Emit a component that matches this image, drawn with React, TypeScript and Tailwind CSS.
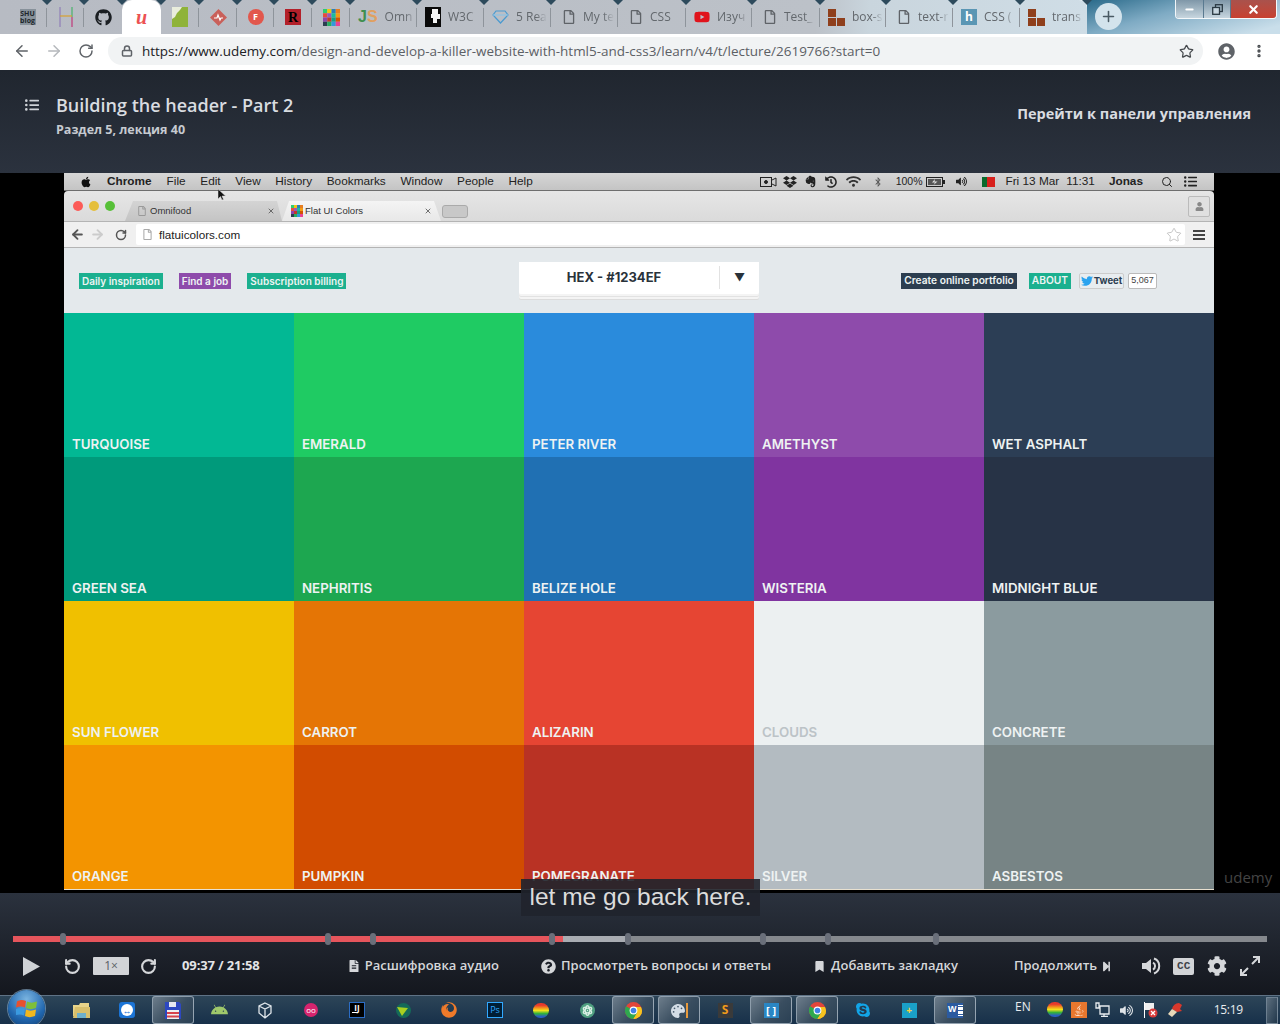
import { ArrowLeft, ArrowRight, Lock, MoreVertical, Plus, RotateCcw, RotateCw, Search, Star, Minus, X } from "lucide-react";
import {
  FaAndroid,
  FaApple,
  FaAtom,
  FaBluetoothB,
  FaBookmark,
  FaCog,
  FaDropbox,
  FaEvernote,
  FaFileAlt,
  FaFirefox,
  FaGithub,
  FaHistory,
  FaJava,
  FaListUl,
  FaPalette,
  FaQuestionCircle,
  FaRegFile,
  FaSkype,
  FaStepForward,
  FaTwitter,
  FaUser,
  FaUserCircle,
  FaVolumeUp,
  FaWifi,
  FaYoutube,
} from "react-icons/fa";
import type { ReactNode } from "react";

const BrickIcon = () => (
  <svg width="17" height="17" viewBox="0 0 17 17">
    <rect x="0" y="0" width="8" height="8" fill="#8f3f1c" />
    <rect x="0" y="9" width="8" height="8" fill="#8f3f1c" />
    <rect x="9" y="9" width="8" height="8" fill="#8f3f1c" />
  </svg>
);

const DocIcon = () => <FaRegFile className="ml-[3px] text-[#5f6368]" size={14} />;

const MosaicIcon = ({ size }: { size: number }) => (
  <svg width={size} height={size} viewBox="0 0 4 4">
    {["#2ecc71", "#f1c40f", "#2980b9", "#e67e22", "#e74c3c", "#9b59b6", "#1abc9c", "#f39c12", "#8e44ad", "#c0392b", "#16a085", "#d35400", "#2c3e50", "#27ae60", "#3498db", "#e84393"].map((c, i) => (
      <rect key={i} x={i % 4} y={Math.floor(i / 4)} width="1" height="1" fill={c} />
    ))}
  </svg>
);

const ChromeIcon = () => (
  <svg width="17" height="17" viewBox="0 0 24 24">
    <circle cx="12" cy="12" r="12" fill="#e2453a" />
    <path d="M12 12 1.600 6A12 12 0 0 0 12 24l6-10z" fill="#2fa84f" />
    <path d="M12 12h12a12 12 0 0 1-12 12l6-10z" fill="#f7c41f" />
    <path d="M12 7h10.500A12 12 0 0 1 24 12a12 12 0 0 1-12 12l5.500-9z" fill="#f7c41f" />
    <circle cx="12" cy="12" r="5.500" fill="#fff" />
    <circle cx="12" cy="12" r="4" fill="#3f82e8" />
  </svg>
);

const RainbowBall = () => (
  <span className="h-[15px] w-[16px] rounded-full bg-[linear-gradient(#e8392c_15%,#f59a1c_35%,#f2e21c_50%,#35b23a_70%,#2a5fc0_90%)]" />
);

const tabs: { w: number; icon: ReactNode; label?: string; active?: boolean }[] = [
  {
    w: 39,
    icon: (
      <span className="flex h-[16px] w-[16px] items-center justify-center bg-[#87919a] text-center text-[7px] font-bold leading-[7px] text-[#20262c]">
        SHU blog
      </span>
    ),
  },
  {
    w: 37,
    icon: (
      <svg width="14" height="20" viewBox="0 0 14 20" fill="none" strokeWidth="1.200">
        <path d="M1 0v20" stroke="#8f7fb8" />
        <path d="M13 0v10" stroke="#49b36b" />
        <path d="M13 10v10" stroke="#c0397a" />
        <path d="M1 9h12" stroke="#d8a030" />
      </svg>
    ),
  },
  { w: 38, icon: <FaGithub size={17} className="text-[#1b1f23]" /> },
  {
    w: 39,
    active: true,
    icon: (
      <span className="font-['Liberation_Serif',serif] text-[20px] font-bold italic leading-none text-[#ec5252]">u</span>
    ),
  },
  {
    w: 38,
    icon: (
      <svg width="16" height="20" viewBox="0 0 16 20">
        <rect width="16" height="20" fill="#8fb339" />
        <path d="M0 0h10L8 3 5 6 3 10 0 12z" fill="#e9eddc" />
      </svg>
    ),
  },
  {
    w: 38,
    icon: (
      <svg width="17" height="17" viewBox="0 0 17 17">
        <path d="M8.500 0 17 8.500 8.500 17 0 8.500z" fill="#c9605a" />
        <path d="M4 9h3l1-3 2 5 1-2h2" stroke="#fff" strokeWidth="1.200" fill="none" />
      </svg>
    ),
  },
  {
    w: 37,
    icon: (
      <span className="flex h-4 w-4 items-center justify-center rounded-full bg-[#e2574c] text-[9px] font-bold text-white">F</span>
    ),
  },
  {
    w: 38,
    icon: (
      <span className="flex h-4 w-4 items-center justify-center bg-[#b3202a] font-['Liberation_Serif',serif] text-[14px] font-bold text-black">R</span>
    ),
  },
  { w: 38, icon: <MosaicIcon size={17} /> },
  {
    w: 67,
    icon: (
      <span className="font-['Liberation_Sans',sans-serif] text-[16px] font-bold leading-none">
        <span className="text-[#3f8f4f]">J</span>
        <span className="text-[#e0a060]">S</span>
      </span>
    ),
    label: "Omn",
  },
  {
    w: 67,
    icon: (
      <svg width="16" height="20" viewBox="0 0 16 20">
        <rect width="16" height="20" fill="#0a0a0a" />
        <path d="M7 2h6v5h2v5h-3v4H8v-5H6V7h1z" fill="#f4f4f4" />
      </svg>
    ),
    label: "W3C",
  },
  {
    w: 67,
    icon: (
      <svg width="17" height="14" viewBox="0 0 17 14" fill="none" stroke="#4a9ad0" strokeWidth="1.200">
        <path d="M4 1h9l3 4-7.500 8L1 5z" />
        <path d="M1 5h15" stroke="#8ec4e4" />
      </svg>
    ),
    label: "5 Rea",
  },
  { w: 67, icon: <DocIcon />, label: "My te" },
  { w: 68, icon: <DocIcon />, label: "CSS" },
  { w: 66, icon: <FaYoutube size={16} className="text-[#e0141c]" />, label: "Изуч" },
  { w: 68, icon: <DocIcon />, label: "Test_" },
  { w: 66, icon: <BrickIcon />, label: "box-s" },
  { w: 67, icon: <DocIcon />, label: "text-r" },
  {
    w: 67,
    icon: <span className="flex h-4 w-4 items-center justify-center bg-[#5a96b4] text-[12px] font-bold text-white">h</span>,
    label: "CSS (",
  },
  { w: 67, icon: <BrickIcon />, label: "trans" },
];

function TabStrip() {
  return (
    <div className="flex h-[34px] font-['Open_Sans',sans-serif]">
      <div className="flex w-[1087px] shrink-0 rounded-tr-[8px] bg-[linear-gradient(90deg,#b7bbc3_0%,#bcc1c8_75%,#c9d5dd_80%,#cfdde6_100%)] pl-[8px]">
        {tabs.map((t, i) => (
          <div
            key={i}
            style={{ width: t.w }}
            className={`relative flex h-full shrink-0 items-center ${t.label ? "pl-[8px]" : "justify-center"} ${t.active ? "rounded-t-[10px] bg-white" : ""}`}
          >
            {t.icon}
            {t.label && (
              <span className="ml-[7px] w-[31px] overflow-hidden whitespace-nowrap text-[12px] text-[#63686d] [mask-image:linear-gradient(90deg,#000_65%,transparent)]">
                {t.label}
              </span>
            )}
            {i < tabs.length - 1 && !t.active && i !== 2 && (
              <span className="absolute right-0 top-[8px] h-[19px] w-px bg-[#8e949b]" />
            )}
            <span className="absolute right-[-5px] top-0 h-0 w-0 border-x-[5px] border-t-[5px] border-x-transparent border-t-[#2d4a5c]" />
          </div>
        ))}
      </div>
      <div className="flex flex-1 items-start bg-[linear-gradient(165deg,#2a6a8a_0%,#7fabc4_40%,#c9deea_90%)]">
        <div className="ml-[8px] mt-[3px] flex h-[27px] w-[27px] items-center justify-center rounded-full bg-[#d3e3ec]">
          <Plus size={17} className="text-[#4a5a64]" strokeWidth={2.2} />
        </div>
        <div className="ml-auto mr-[3px] flex h-[19px] w-[102px] overflow-hidden rounded-b-[4px] border border-t-0 border-white/90">
          <div className="flex w-[28px] items-center justify-center border-r border-[#5a7a90] bg-gradient-to-b from-[#7f97a8] to-[#c7d6df]">
            <Minus size={11} className="text-white" strokeWidth={4} />
          </div>
          <div className="flex w-[27px] items-center justify-center border-r border-[#5a7a90] bg-gradient-to-b from-[#7f97a8] to-[#c7d6df]">
            <svg width="11" height="11" viewBox="0 0 11 11" fill="none" stroke="#2b3a44" strokeWidth="1.300">
              <rect x="3.500" y="0.700" width="6.800" height="6.800" />
              <rect x="0.700" y="3.500" width="6.800" height="6.800" fill="#c7d6df" />
            </svg>
          </div>
          <div className="flex flex-1 items-center justify-center bg-gradient-to-b from-[#a9524c] to-[#c8402f]">
            <X size={13} className="text-white" strokeWidth={4} />
          </div>
        </div>
      </div>
    </div>
  );
}

function Toolbar() {
  return (
    <div className="flex h-[36px] items-center bg-white pb-[2px] font-['Open_Sans',sans-serif]">
      <ArrowLeft size={18} className="ml-[13px] text-[#5f6368]" strokeWidth={2} />
      <ArrowRight size={18} className="ml-[14px] text-[#b5b8bc]" strokeWidth={2} />
      <RotateCw size={16} className="ml-[15px] text-[#5f6368]" strokeWidth={2.2} />
      <div className="ml-[14px] flex h-[28px] w-[1095px] items-center rounded-full bg-[#f1f3f4] pl-[13px]">
        <Lock size={12} className="text-[#5f6368]" strokeWidth={3} />
        <span className="ml-[9px] mt-[1px] whitespace-nowrap text-[13.470px] text-[#5c6065]">
          <span className="text-[#202124]">https://www.udemy.com</span>/design-and-develop-a-killer-website-with-html5-and-css3/learn/v4/t/lecture/2619766?start=0
        </span>
        <Star size={15} className="ml-auto mr-[9px] text-[#45494d]" strokeWidth={2} />
      </div>
      <FaUserCircle size={17} className="ml-[15px] text-[#5f6368]" />
      <MoreVertical size={16} className="ml-[16px] text-[#45494d]" strokeWidth={3} />
    </div>
  );
}

function LectureHeader() {
  return (
    <div className="flex h-[103px] items-start bg-gradient-to-b from-[#20262f] to-[#2b323e] font-['Open_Sans',sans-serif] text-[#d9dce0]">
      <FaListUl size={14} className="ml-[25px] mt-[28px] shrink-0 text-[#cfd3d8]" />
      <div className="ml-[17px] mt-[23px]">
        <div className="text-[18px] font-semibold leading-[24px]">Building the header - Part 2</div>
        <div className="mt-[4px] text-[12.500px] font-bold leading-[18px] text-[#c6cad0]">Раздел 5, лекция 40</div>
      </div>
      <div className="ml-auto mr-[29px] mt-[33px] text-[14.500px] font-bold leading-[22px]">Перейти к панели управления</div>
    </div>
  );
}

function MacMenuBar() {
  const menus = ["File", "Edit", "View", "History", "Bookmarks", "Window", "People", "Help"];
  return (
    <div className="flex h-[18px] items-center border-b border-[#6e6e6e] bg-gradient-to-b from-[#d6d6d6] to-[#c4c4c4] font-['Liberation_Sans',sans-serif] text-[11.800px] text-[#222]">
      <FaApple size={12} className="ml-[16px] text-[#111]" />
      <span className="ml-[15px] font-bold">Chrome</span>
      <div className="ml-[15px] flex gap-[14.700px]">
        {menus.map((m) => (
          <span key={m}>{m}</span>
        ))}
      </div>
      <div className="ml-auto flex items-center text-[#222]">
        <svg width="17" height="12" viewBox="0 0 17 12" fill="none" stroke="#222">
          <rect x="0.500" y="1.500" width="11" height="9" />
          <circle cx="6" cy="6" r="1.500" fill="#222" />
          <path d="M12 4l4-2v8l-4-2" />
        </svg>
        <FaDropbox size={14} className="ml-[6px]" />
        <FaEvernote size={13} className="ml-[7px]" />
        <FaHistory size={12} className="ml-[8px]" />
        <FaWifi size={15} className="ml-[9px] text-[#333]" />
        <FaBluetoothB size={10} className="ml-[12px] text-[#555]" />
        <span className="ml-[13px] text-[10.500px]">100%</span>
        <svg className="ml-[4px]" width="19" height="10" viewBox="0 0 19 10">
          <rect x="0.500" y="0.500" width="16" height="9" fill="none" stroke="#222" />
          <path d="M2 2h13v6H2z" fill="#555" />
          <path d="M9 2 6 5.500h3L7.500 8l4-3.500h-3z" fill="#ddd" />
          <rect x="17" y="3" width="2" height="4" fill="#222" />
        </svg>
        <FaVolumeUp size={11} className="ml-[11px]" />
        <span className="ml-[15px] flex h-[10px] w-[13px]">
          <span className="w-[5px] bg-[#0a6a2c]" />
          <span className="flex-1 bg-[#d8201c]" />
        </span>
        <span className="ml-[10px]">Fri 13 Mar</span>
        <span className="ml-[7px]">11:31</span>
        <span className="ml-[14px] font-semibold">Jonas</span>
        <Search size={12} className="ml-[18px]" />
        <FaListUl size={13} className="ml-[11px] mr-[17px]" />
      </div>
    </div>
  );
}

function MacChrome() {
  return (
    <div className="rounded-t-[4px] bg-gradient-to-b from-[#e6e6e6] to-[#d0d0d0] font-['Liberation_Sans',sans-serif]">
      {/* Tabs */}
      <div className="flex h-[30px] items-end">
        <div className="mb-[10px] ml-[9px] flex gap-[6px]">
          <span className="h-[10px] w-[10px] rounded-full bg-[#fc5b57]" />
          <span className="h-[10px] w-[10px] rounded-full bg-[#e5bf3c]" />
          <span className="h-[10px] w-[10px] rounded-full bg-[#57c038]" />
        </div>
        <div className="ml-[10px] flex h-[20px] w-[157px] items-center bg-gradient-to-b from-[#d4d4d4] to-[#c4c4c4] pl-[12px] text-[9.500px] text-[#333] [clip-path:polygon(0_100%,8px_0,calc(100%-5px)_0,100%_100%)]">
          <FaRegFile size={10} className="text-[#999]" />
          <span className="ml-[3px]">Omnifood</span>
          <X size={8} className="ml-auto mr-[7px] text-[#555]" strokeWidth={2.5} />
        </div>
        <div className="flex h-[20px] w-[159px] items-center bg-gradient-to-b from-[#f4f4f4] to-[#e8e8e8] pl-[9px] text-[9.500px] text-[#333] [clip-path:polygon(0_100%,7px_0,calc(100%-7px)_0,100%_100%)]">
          <MosaicIcon size={12} />
          <span className="ml-[2px]">Flat UI Colors</span>
          <X size={8} className="ml-auto mr-[9px] text-[#555]" strokeWidth={2.5} />
        </div>
        <div className="mb-[3px] ml-[1px] h-[13px] w-[26px] rounded-[3px] border border-[#aaa] bg-[#c8c8c8]" />
        <div className="mb-[4px] ml-auto mr-[4px] flex h-[21px] w-[22px] items-center justify-center rounded-[2px] border border-[#bbb] bg-[#e0e0e0]">
          <FaUser size={9} className="text-[#888]" />
        </div>
      </div>
      {/* Address */}
      <div className="flex h-[27px] items-center border-y border-[#b4b4b4] bg-[#f0f0f0]">
        <ArrowLeft size={15} className="ml-[6px] text-[#555]" strokeWidth={3} />
        <ArrowRight size={15} className="ml-[5px] text-[#ccc]" strokeWidth={3} />
        <RotateCw size={12} className="ml-[10px] text-[#555]" strokeWidth={3} />
        <div className="ml-[9px] flex h-[21px] w-[1049px] items-center rounded-[2px] bg-white pl-[6px]">
          <FaRegFile size={11} className="text-[#aaa]" />
          <span className="ml-[6px] text-[11.700px] text-[#222]">flatuicolors.com</span>
          <Star size={16} className="ml-auto mr-[3px] text-[#aaa]" strokeWidth={1} />
        </div>
        <div className="ml-[8px] flex w-[12px] flex-col gap-[2px]">
          <span className="h-[2px] bg-[#444]" />
          <span className="h-[2px] bg-[#444]" />
          <span className="h-[2px] bg-[#444]" />
        </div>
      </div>
    </div>
  );
}

const Pill = ({ bg, children }: { bg: string; children: ReactNode }) => (
  <span className={`flex h-[16px] items-center whitespace-nowrap px-[3px] font-semibold text-[#eef4f3] ${bg}`}>{children}</span>
);

function FlatNav() {
  return (
    <div className="flex h-[65px] bg-[#e4e9ec] font-['Inter',sans-serif]">
      <div className="flex w-[455px] items-center gap-[16px] pl-[15px] pt-[1px] text-[10px]">
        <Pill bg="bg-[#1bb08f]">Daily inspiration</Pill>
        <Pill bg="bg-[#8e4bab]">Find a job</Pill>
        <Pill bg="bg-[#1bb08f]">Subscription billing</Pill>
      </div>
      <div className="mt-[14px] h-[32px] w-[240px] rounded-b-[2px] bg-white shadow-[0_2px_0_#f4f4f4,0_3px_0_#e2e2e2,0_5px_0_#f4f4f4,0_6px_0_#dcdcdc]">
        <div className="flex h-[31px] items-center">
          <span className="w-[200px] pr-[10px] text-center text-[13px] font-bold text-[#29323a]">HEX - #1234EF</span>
          <span className="flex h-[23px] flex-1 items-center justify-center border-l border-[#e2e2e2] text-[11px] text-[#29323a]">▼</span>
        </div>
      </div>
      <div className="flex flex-1 items-center justify-end pr-[57px] pt-[1px] text-[10.200px]">
        <Pill bg="bg-[#2c3e50]">Create online portfolio</Pill>
        <span className="ml-[12px]">
          <Pill bg="bg-[#1bb08f]">ABOUT</Pill>
        </span>
        <span className="ml-[8px] flex h-[16px] w-[45px] items-center justify-center gap-[1px] rounded-[2px] border border-[#ccc] bg-[#e8edf0] text-[9.500px] font-bold text-[#2c3e50]">
          <FaTwitter size={12} className="text-[#2aa3ef]" />
          Tweet
        </span>
        <span className="ml-[4px] flex h-[16px] w-[29px] items-center justify-center rounded-[2px] border border-[#bbb] bg-white font-['Liberation_Sans',sans-serif] text-[9px] text-[#444]">5,067</span>
      </div>
    </div>
  );
}

const swatches: { name: string; bg: string; text?: string }[] = [
  { name: "TURQUOISE", bg: "bg-[#02b894]" },
  { name: "EMERALD", bg: "bg-[#1fcb63]" },
  { name: "PETER RIVER", bg: "bg-[#2a8bdc]" },
  { name: "AMETHYST", bg: "bg-[#8e4bab]" },
  { name: "WET ASPHALT", bg: "bg-[#2c3e55]" },
  { name: "GREEN SEA", bg: "bg-[#009a7b]" },
  { name: "NEPHRITIS", bg: "bg-[#1da750]" },
  { name: "BELIZE HOLE", bg: "bg-[#2070b3]" },
  { name: "WISTERIA", bg: "bg-[#8034a0]" },
  { name: "MIDNIGHT BLUE", bg: "bg-[#273346]" },
  { name: "SUN FLOWER", bg: "bg-[#f0c000]" },
  { name: "CARROT", bg: "bg-[#e57505]" },
  { name: "ALIZARIN", bg: "bg-[#e64533]" },
  { name: "CLOUDS", bg: "bg-[#ecf0f1]", text: "text-[#bcc3c7]" },
  { name: "CONCRETE", bg: "bg-[#8b9b9f]" },
  { name: "ORANGE", bg: "bg-[#f39400]" },
  { name: "PUMPKIN", bg: "bg-[#d24c00]" },
  { name: "POMEGRANATE", bg: "bg-[#b93224]" },
  { name: "SILVER", bg: "bg-[#b3bbc1]" },
  { name: "ASBESTOS", bg: "bg-[#778485]" },
];

function ColorGrid() {
  return (
    <div className="grid grid-cols-5 grid-rows-[repeat(4,144px)] font-['Inter',sans-serif]">
      {swatches.map((s) => (
        <div key={s.name} className={`flex items-end px-[8px] pb-[5px] ${s.bg}`}>
          <span className={`text-[13.300px] font-semibold leading-[16px] ${s.text ?? "text-[#eef2f2]"}`}>{s.name}</span>
        </div>
      ))}
    </div>
  );
}

function VideoArea() {
  return (
    <div className="relative flex h-[720px] bg-black">
      <div className="ml-[64px] h-[717px] w-[1150px] border-b-[1px] border-[#e8e0d0]">
        <MacMenuBar />
        <MacChrome />
        <FlatNav />
        <ColorGrid />
      </div>
      {/* Mouse pointer from the recording */}
      <svg className="absolute left-[218px] top-[16px]" width="8" height="12" viewBox="0 0 8 12">
        <path d="M0 0v10l2.500-2.500L4 11l1.500-.6L4 7h3.500z" fill="#111" stroke="#ddd" strokeWidth=".5" />
      </svg>
      <span className="absolute left-[1224px] top-[694px] font-['Open_Sans',sans-serif] text-[15px] leading-5 text-[#444]">udemy</span>
      <div className="absolute left-[521px] top-[706px] flex h-[37px] w-[239px] items-center justify-center bg-[#20242c]/90 font-['Liberation_Sans',sans-serif] text-[24.500px] text-[#dcdcdc]">
        let me go back here.
      </div>
    </div>
  );
}

function ProgressBar() {
  const marks = [63, 328, 373, 552, 628, 763, 828, 936];
  return (
    <div className="relative ml-[13px] mt-[43px] flex h-[6px] w-[1254px] bg-[#85888d]">
      <div className="h-full w-[550px] bg-[#e6555c]" />
      <div className="h-full w-[65px] bg-[#a9acb2]" />
      {marks.map((x) => (
        <span
          key={x}
          style={{ left: x - 16 }}
          className="absolute top-[-3px] h-[12px] w-[6px] rounded-[3px] bg-[#6a6f7a]"
        />
      ))}
    </div>
  );
}

function ControlBar() {
  return (
    <div className="h-[102px] overflow-hidden bg-gradient-to-b from-[#2b323e] to-[#14171e] font-['Open_Sans',sans-serif] text-[#d5d7da]">
      <ProgressBar />
      <div className="mt-[14px] flex h-[20px] items-center text-[13px] font-semibold">
        <svg className="ml-[23px]" width="17" height="19" viewBox="0 0 17 19">
          <path d="M0 0 17 9.500 0 19z" fill="#cfd2d6" />
        </svg>
        <RotateCcw size={17} className="ml-[24px]" strokeWidth={3} />
        <span className="ml-[12px] flex h-[18px] w-[36px] items-center justify-center rounded-[1px] bg-[#d2d4d7] text-[12px] font-normal text-[#5a5f66]">1×</span>
        <RotateCw size={17} className="ml-[11px]" strokeWidth={3} />
        <span className="ml-[25px] font-bold tracking-[-0.1px] text-[#e4e5e7]">09:37 / 21:58</span>
        <FaFileAlt size={12} className="ml-[88px]" />
        <span className="ml-[5px]">Расшифровка аудио</span>
        <FaQuestionCircle size={15} className="ml-[42px]" />
        <span className="ml-[5px]">Просмотреть вопросы и ответы</span>
        <FaBookmark size={11} className="ml-[43px]" />
        <span className="ml-[6px]">Добавить закладку</span>
        <span className="ml-[56px]">Продолжить</span>
        <FaStepForward size={11} className="ml-[4px]" />
        <svg className="ml-[30px]" width="19" height="20" viewBox="0 0 19 20" fill="none" stroke="#d5d7da">
          <path d="M0 7h4l5-4v14l-5-4H0z" fill="#d5d7da" stroke="none" />
          <path d="M11 6.500a4 4 0 0 1 0 7" strokeWidth="2" />
          <path d="M12 2.500a8 8 0 0 1 0 15" strokeWidth="2" />
        </svg>
        <span className="ml-[12px] flex h-[17px] w-[21px] items-center justify-center rounded-[2px] bg-[#d2d4d7] font-['Liberation_Mono',monospace] text-[11px] font-bold text-[#3d4148]">CC</span>
        <FaCog size={20} className="ml-[13px]" />
        <svg className="ml-[13px]" width="20" height="20" viewBox="0 0 20 20" fill="none" stroke="#d5d7da" strokeWidth="2">
          <path d="M13 1h6v6M18.500 1.500 12 8M7 19H1v-6M1.500 18.500 8 12" />
        </svg>
      </div>
    </div>
  );
}

const taskIcons: { node: ReactNode; active?: boolean }[] = [
  {
    node: (
      <svg width="17" height="16" viewBox="0 0 17 16">
        <path d="M0 3h6l1-2h9v13H0z" fill="#e8d48a" />
        <path d="M2 5h15v11H0z" fill="#d9c06c" />
        <path d="M4 11h9v5H4z" fill="#6fb0cc" />
      </svg>
    ),
  },
  {
    node: (
      <span className="flex h-[16px] w-[16px] items-center justify-center rounded-[3px] bg-[#1b74d6]">
        <span className="flex h-[12px] w-[12px] items-center justify-center rounded-full bg-white text-[9px] font-bold leading-none text-[#1b74d6]">↔</span>
      </span>
    ),
  },
  {
    node: (
      <svg width="16" height="17" viewBox="0 0 16 17">
        <path d="M0 0h14l2 2v15H0z" fill="#2d48c0" />
        <path d="M4 0h7v5H4z" fill="#e6e8f0" />
        <path d="M2 8h12v9H2z" fill="#f0f0f0" />
        <path d="M2 10h12v2H2zM2 13.500h12v2H2z" fill="#d8424c" />
      </svg>
    ),
    active: true,
  },
  { node: <FaAndroid size={17} className="text-[#9fc86b]" /> },
  {
    node: (
      <svg width="14" height="17" viewBox="0 0 14 17" fill="none" stroke="#dfe5ea" strokeWidth="1.300">
        <path d="M7 1 13 4v7l-6 5-6-5V4zM1 4l6 3 6-3M7 7v9" />
      </svg>
    ),
  },
  { node: <span className="flex h-[14px] w-[14px] items-center justify-center rounded-full bg-[#d6246e] text-[8px] text-white">oo</span> },
  { node: <span className="flex h-[16px] w-[16px] flex-col items-center border border-[#2b6cc4] bg-black text-[8px] font-bold leading-[10px] text-white">IJ<span className="-mt-[1px] ml-[-6px] h-[1px] w-[5px] bg-white" /></span> },
  {
    node: (
      <svg width="15" height="15" viewBox="0 0 15 15">
        <circle cx="7.500" cy="7.500" r="7.500" fill="#146a58" />
        <path d="M1 4l11 1-6 8z" fill="#a8d020" />
      </svg>
    ),
  },
  { node: <FaFirefox size={16} className="text-[#ef7a2a]" /> },
  { node: <span className="flex h-[16px] w-[16px] items-center justify-center border border-[#31a8ff] bg-[#001e36] text-[9px] text-[#31a8ff]">Ps</span> },
  { node: <RainbowBall /> },
  {
    node: (
      <span className="flex h-[15px] w-[15px] items-center justify-center rounded-full bg-[#4f9f80]">
        <FaAtom size={11} className="text-[#d8efe4]" />
      </span>
    ),
  },
  { node: <ChromeIcon />, active: true },
  {
    node: (
      <span className="flex items-end">
        <FaPalette size={14} className="text-[#d4dde6]" />
        <span className="ml-[1px] h-[15px] w-[2px] bg-[#e89a3c]" />
      </span>
    ),
    active: true,
  },
  { node: <span className="flex h-[15px] w-[15px] items-center justify-center bg-[#3a3a3a] text-[12px] font-bold text-[#f09a1a]">S</span> },
  {
    node: <span className="flex h-[15px] w-[15px] items-center justify-center bg-[#2a86c4] text-[11px] font-bold leading-none text-white">[ ]</span>,
    active: true,
  },
  { node: <ChromeIcon />, active: true },
  { node: <FaSkype size={16} className="text-[#12a5e8]" /> },
  { node: <span className="flex h-[15px] w-[15px] items-center justify-center bg-[#1aa0c8] text-[10px] font-bold text-[#f4d040]">+</span> },
  {
    node: (
      <span className="flex h-[15px] w-[16px] items-center bg-[#2b5aa0] pl-[1px] font-['Liberation_Sans',sans-serif] text-[9px] font-bold text-white">
        W
        <span className="ml-[1px] flex h-[11px] w-[5px] flex-col justify-between bg-white py-[1px]">
          <span className="h-px bg-[#2b5aa0]" />
          <span className="h-px bg-[#2b5aa0]" />
          <span className="h-px bg-[#2b5aa0]" />
        </span>
      </span>
    ),
    active: true,
  },
];

function Taskbar() {
  return (
    <div className="relative flex h-[29px] items-center border-t border-[#7d8f9e]/70 bg-[linear-gradient(180deg,#2d4558,#17304a)] font-['Open_Sans',sans-serif] text-[#e8ecef]">
      {/* Start orb */}
      <span className="absolute left-[8px] top-[-6px] flex h-[37px] w-[37px] items-center justify-center rounded-full bg-[radial-gradient(circle_at_50%_25%,#7ab4e0,#2066ae_60%,#123a6c)] ring-1 ring-[#8cb0d0]/60">
        <svg width="21" height="19" viewBox="0 0 21 19">
          <path d="M1 2.500C4 .500 7 .500 10 2l-1 6.500C6 7 3.500 7 0 8.500z" fill="#e8502e" />
          <path d="M11 2.500c3 1.500 6 1.500 10 0l-1 6.500c-4 1.500-7 1.500-10 0z" fill="#7fbf3a" />
          <path d="M0 10c3-1.500 6-1.500 9 0l-1 6.500c-3-1.500-6-1.500-9 0z" fill="#3a9ae0" />
          <path d="M10 10.500c3 1.500 6 1.500 10 0l-1 6.500c-4 1.500-7 1.500-10 0z" fill="#f2b81e" />
        </svg>
      </span>
      <div className="ml-[60px] flex gap-[4px]">
        {taskIcons.map((t, i) => (
          <span
            key={i}
            className={`flex h-[28px] w-[42px] items-center justify-center rounded-[3px] ${
              t.active ? "border border-[#a5b3bf]/80 bg-[linear-gradient(135deg,#6d7d8b,#3a4e60_55%,#2a4054)]" : ""
            }`}
          >
            {t.node}
          </span>
        ))}
      </div>
      <span className="mb-[6px] ml-[39px] text-[12px] leading-4">EN</span>
      <div className="ml-[12px] flex">
        <span className="flex w-[24px] justify-center"><RainbowBall /></span>
        <span className="flex w-[24px] justify-center">
          <span className="flex h-[16px] w-[16px] items-center justify-center bg-[#e8772e]">
            <FaJava size={12} className="text-white" />
          </span>
        </span>
        <span className="flex w-[24px] justify-center">
          <svg width="15" height="15" viewBox="0 0 15 15" fill="none" stroke="#e8ecef" strokeWidth="1.300">
            <path d="M1 1h3v5H1zM5 4h9v8H5zM9 12v2M6 14.300h7" />
          </svg>
        </span>
        <span className="flex w-[24px] items-center justify-center">
          <FaVolumeUp size={13} className="text-[#dfe4e8]" />
        </span>
        <span className="flex w-[24px] justify-center">
          <svg width="15" height="16" viewBox="0 0 15 16">
            <path d="M1 0h1v16H1z" fill="#fff" />
            <path d="M2 1h9v7H2z" fill="#f0f0f0" />
            <circle cx="10" cy="11" r="4.500" fill="#d83a3a" />
            <path d="M8 9l4 4M12 9l-4 4" stroke="#fff" strokeWidth="1.300" />
          </svg>
        </span>
        <span className="flex w-[24px] justify-center">
          <svg width="16" height="16" viewBox="0 0 16 16">
            <path d="M12 1a7 7 0 0 0-7 6l5 3 5-1-2-2 2-4z" fill="#d8382c" />
            <path d="M5 7 1 12l4 3 5-5z" fill="#e8d8b8" />
          </svg>
        </span>
      </div>
      <span className="ml-[27px] text-[12px] tracking-[-0.3px]">15:19</span>
      <span className="ml-auto mr-[2px] h-[27px] w-[12px] border border-[#8899a8]/70 bg-gradient-to-br from-[#5d6f7e] to-[#22384c]" />
    </div>
  );
}

export default function App() {
  return (
    <div className="h-[1024px] w-[1280px] overflow-hidden">
      <TabStrip />
      <Toolbar />
      <LectureHeader />
      <VideoArea />
      <ControlBar />
      <Taskbar />
    </div>
  );
}
